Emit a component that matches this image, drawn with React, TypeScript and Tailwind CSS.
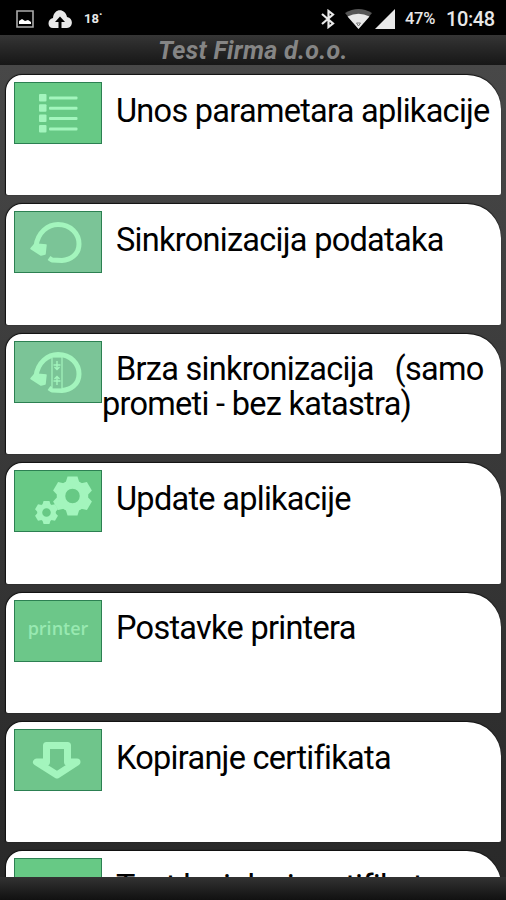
import React from 'react';

interface MenuItem {
  label: React.ReactNode;
  icon: React.ReactNode;
  tile: string;
}

const SyncShape = () => (
  <>
    <path d="M21 34 C23 20 33 12.500 43 12.500 C56 12.500 64 22 64 32 C64 43 55 48 47 48.500 L37 48 L34 46" strokeWidth="5" strokeLinejoin="round" fill="none" stroke="#a3f5bd" />
    <path d="M16 36.500 L20 32 L31 33 L30 42 L26 43 Z" fill="#a3f5bd" stroke="#a3f5bd" strokeWidth="1.5" strokeLinejoin="round" />
  </>
);

const TileSvg = ({ children }: { children: React.ReactNode }) => (
  <svg viewBox="0 0 86 60" className="block h-[60px] w-[86px]">{children}</svg>
);

const ListIcon = () => (
  <TileSvg>
    {[11, 21.3, 31.6, 42].map((y) => (
      <g key={y} fill="#a3f5bd">
        <rect x="24" y={y} width="7.500" height="7.500" rx="1" />
        <rect x="34" y={y + 2.5} width="28.500" height="3" rx="1" />
      </g>
    ))}
  </TileSvg>
);

const QuickSyncIcon = () => (
  <TileSvg>
    <SyncShape />
    <rect x="37" y="15" width="10" height="32" fill="#7bc497" stroke="#a3f5bd" strokeWidth="1.2" />
    <path d="M42 19v8M38.500 23h7M39.500 25l2.500 2.500 2.500-2.500M42 43v-8M38.500 39h7M39.500 37l2.500-2.500 2.500 2.500" stroke="#a3f5bd" strokeWidth="1.4" fill="none" />
  </TileSvg>
);

const Gear = ({ x, y, scale }: { x: number; y: number; scale: number }) => (
  <g transform={`translate(${x} ${y}) scale(${scale})`}>
    {[0, 60, 120, 180, 240, 300].map((a) => (
      <path key={a} d="M-7 -13L-5 -19.500H5L7 -13Z" fill="#a3f5bd" transform={`rotate(${a})`} />
    ))}
    <circle r="11.500" fill="none" stroke="#a3f5bd" strokeWidth="8.500" />
  </g>
);

const items: MenuItem[] = [
  { label: 'Unos parametara aplikacije', icon: <ListIcon />, tile: 'bg-[#67c985]' },
  { label: 'Sinkronizacija podataka', icon: <TileSvg><SyncShape /></TileSvg>, tile: 'bg-[#7bc497]' },
  {
    label: <>Brza sinkronizacija <span className="inline-block w-[6px]" /> (samo<br />prometi - bez katastra)</>,
    icon: <QuickSyncIcon />,
    tile: 'bg-[#7bc497]',
  },
  {
    label: 'Update aplikacije',
    icon: <TileSvg><Gear x={57.5} y={25} scale={1} /><Gear x={31.5} y={41.5} scale={0.59} /></TileSvg>,
    tile: 'bg-[#67c985]',
  },
  {
    label: 'Postavke printera',
    icon: <span className="block pt-[14px] text-center font-['Open_Sans',sans-serif] text-[18px] leading-[27px] font-semibold text-[#98e9b1]">printer</span>,
    tile: 'bg-[#6cc789]',
  },
  {
    label: 'Kopiranje certifikata',
    icon: (
      <TileSvg>
        <path d="M31.500 15.500H52.500V32H62L42 45L21.500 32H31.500Z" fill="none" stroke="#a3f5bd" strokeWidth="7" strokeLinejoin="round" />
      </TileSvg>
    ),
    tile: 'bg-[#6fc58b]',
  },
  { label: 'Test lozinke i certifikata', icon: null, tile: 'bg-[#67c985]' },
];

const StatusBar = () => (
  <div className="flex h-[35px] shrink-0 items-center bg-black pt-[2px] text-[#e8e8e8]">
    <svg viewBox="0 0 18 18" className="ml-[16px] h-[18px] w-[18px] shrink-0">
      <path d="M1 1H17V17H1Z" fill="none" stroke="#aaa" strokeWidth="1.6" />
      <path d="M3 14V11L6 9L9 11L12 10L15 12V14Z" fill="#fff" />
    </svg>
    <svg viewBox="0 0 24 18" className="ml-[14px] h-[18px] w-[24px] shrink-0">
      <path d="M5 18C-1 18-1 9 5 8C6-2 17-2 19 7C26 8 25 18 19 18H13.500V12H17L12 6.500L7 12H10.500V18Z" fill="#e8e8e8" />
    </svg>
    <span className="ml-[12px] w-[28px] text-[13px] font-bold">18˙</span>
    <svg viewBox="0 0 14 20" className="ml-[209px] h-[20px] w-[14px] shrink-0" fill="none" stroke="#e8e8e8" strokeWidth="2.2">
      <path d="M1 5L12 14.500L7.500 18V2L12 5.500L1 15" />
    </svg>
    <svg viewBox="0 0 27 20" className="ml-[10px] h-[20px] w-[27px] shrink-0">
      <path d="M0 4Q13.500 -4 27 4L13.500 20Z" fill="#555" />
      <path d="M2.500 7.500Q13.500 2 24.500 7.500L13.500 20Z" fill="#e8e8e8" />
      <path d="M11.500 14H15.500L13.500 17Z" fill="none" stroke="#777" />
    </svg>
    <svg viewBox="0 0 20 20" className="ml-[3px] h-[20px] w-[20px] shrink-0"><path d="M20 0V20H0Z" fill="#e8e8e8" /></svg>
    <span className="ml-[10px] w-[32px] pt-[2px] text-[16.500px] font-medium tracking-[-0.3px] whitespace-nowrap">47%</span>
    <span className="ml-[9px] text-[20px] font-medium tracking-[-0.4px] whitespace-nowrap">10:48</span>
  </div>
);

export default function App() {
  return (
    <div className="flex h-[900px] w-[506px] flex-col overflow-hidden bg-black font-[Roboto,sans-serif]">
      <StatusBar />
      <header className="h-[30px] shrink-0 bg-linear-to-b from-[#353535] to-[#171717] text-center text-[25px] leading-[31px] font-bold tracking-[0.3px] text-[#858585] italic">
        Test Firma d.o.o.
      </header>
      <main className="flex min-h-0 flex-1 flex-col gap-[9px] overflow-hidden bg-linear-to-b from-[#484848] to-[#292929] pt-[10px] pr-[5px] pl-[6px]">
        {items.map((item, i) => (
          <section key={i} className="flex h-[120.4px] shrink-0 rounded-[2px] rounded-tl-[16px] rounded-tr-[34px] bg-white pt-[7px] pl-[8px] shadow-[0_-1px_1px_#111,-1px_0_1px_#111]">
            <div className={`h-[62px] w-[88px] shrink-0 border border-[#2c8052] ${item.tile}`}>{item.icon}</div>
            <p className="pt-[11.6px] indent-[14px] text-[32.5px] leading-[35px] tracking-[-0.72px] whitespace-nowrap text-black">{item.label}</p>
          </section>
        ))}
      </main>
      <footer className="h-[23px] shrink-0 bg-linear-to-b from-[#333] to-[#111]" />
    </div>
  );
}
